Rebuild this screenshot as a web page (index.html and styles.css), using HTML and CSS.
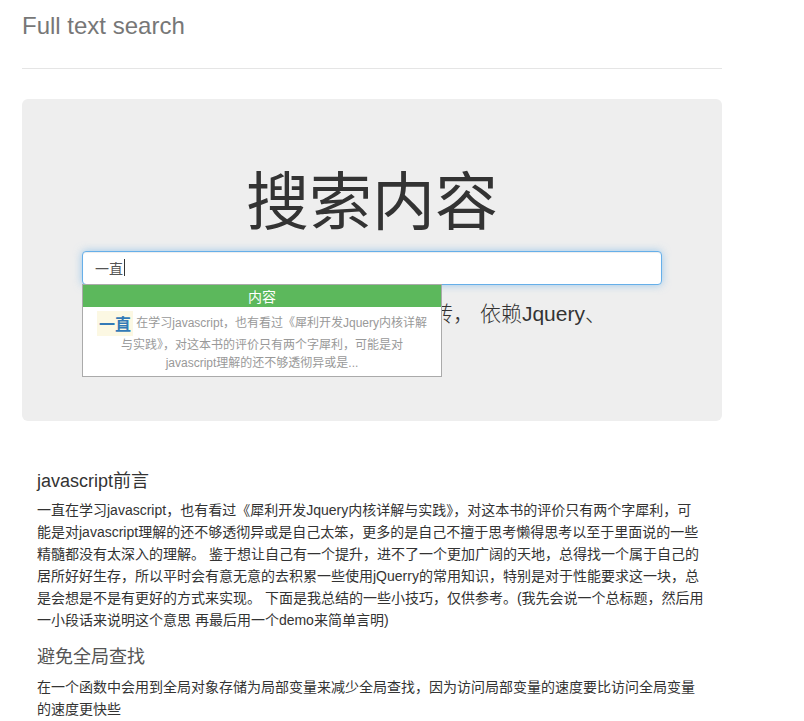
FILE: index.html
```html
<!DOCTYPE html>
<html lang="zh-CN">
<head>
<meta charset="utf-8">
<title>Full text search</title>
<link rel="stylesheet" href="styles.css">
</head>
<body>
  <div class="page-header">
    <h1 class="site-title">Full text search</h1>
  </div>

  <div class="jumbotron">
    <h1 class="hero-title">搜索内容</h1>
    <div class="search">
      <div class="search-input focused"><span class="search-value">一直</span><span class="caret"></span></div>
      <div class="suggest">
        <div class="suggest-head">内容</div>
        <div class="suggest-item"><span class="hit">一直</span> 在学习javascript，也有看过《犀利开发Jquery内核详解与实践》，对这本书的评价只有两个字犀利，可能是对javascript理解的还不够透彻异或是...</div>
      </div>
    </div>
    <p class="lead">实时提示搜索结果，无需页面跳转， 依赖Jquery、</p>
  </div>

  <div class="articles">
    <div class="article">
      <h4 class="article-title">javascript前言</h4>
      <p class="article-body">一直在学习javascript，也有看过《犀利开发Jquery内核详解与实践》，对这本书的评价只有两个字犀利，可能是对javascript理解的还不够透彻异或是自己太笨，更多的是自己不擅于思考懒得思考以至于里面说的一些精髓都没有太深入的理解。 鉴于想让自己有一个提升，进不了一个更加广阔的天地，总得找一个属于自己的居所好好生存，所以平时会有意无意的去积累一些使用jQuerry的常用知识，特别是对于性能要求这一块，总是会想是不是有更好的方式来实现。 下面是我总结的一些小技巧，仅供参考。(我先会说一个总标题，然后用一小段话来说明这个意思 再最后用一个demo来简单言明)</p>
    </div>
    <div class="article">
      <h4 class="article-title muted">避免全局查找</h4>
      <p class="article-body">在一个函数中会用到全局对象存储为局部变量来减少全局查找，因为访问局部变量的速度要比访问全局变量的速度更快些</p>
    </div>
  </div>
</body>
</html>
```

FILE: styles.css
```css
* {
  box-sizing: border-box;
}

body {
  margin: 0;
  background: #fff;
  color: #333;
  font-family: "Liberation Sans", Arial, "Noto Sans CJK SC", sans-serif;
  font-size: 14px;
  line-height: 1.42857;
}

/* Page header */
.page-header {
  width: 700px;
  margin-left: 22px;
  padding-bottom: 29px;
  border-bottom: 1px solid #e5e5e5;
}

.site-title {
  margin: 13px 0 0;
  font-size: 24px;
  font-weight: normal;
  line-height: 1.1;
  color: #777;
}

/* Hero block */
.jumbotron {
  width: 700px;
  margin: 30px 0 0 22px;
  padding: 48px 60px 72px;
  background: #eee;
  border-radius: 6px;
  text-align: center;
}

.hero-title {
  margin: 15px 0 19px;
  font-family: "Noto Sans CJK SC", sans-serif;
  font-size: 63px;
  font-weight: normal;
  line-height: 1.1;
  color: #333;
}

.search {
  position: relative;
  text-align: left;
}

.search-input {
  display: flex;
  align-items: center;
  height: 34px;
  padding: 0 12px;
  background: #fff;
  border: 1px solid #ccc;
  border-radius: 4px;
  font-family: "Noto Sans CJK SC", sans-serif;
  font-size: 14px;
  color: #555;
}

.search-input.focused {
  border-color: #66afe9;
  box-shadow: inset 0 1px 1px rgba(0, 0, 0, .075), 0 0 8px rgba(102, 175, 233, .6);
}

.caret {
  display: inline-block;
  width: 1px;
  height: 17px;
  margin-left: 1px;
  background: #333;
}

/* Autocomplete list */
.suggest {
  position: absolute;
  top: 33px;
  left: 0;
  z-index: 10;
  width: 360px;
  background: #fff;
  border: 1px solid #aaa;
  font-family: "Liberation Sans", Arial, "Noto Sans CJK SC", sans-serif;
}

.suggest-head {
  height: 22px;
  background: #5cb85c;
  color: #fff;
  font-family: "Noto Sans CJK SC", sans-serif;
  font-size: 14px;
  line-height: 22px;
  text-align: center;
}

.suggest-item {
  padding: 4px 13px;
  font-size: 12px;
  line-height: 18px;
  color: #999;
  text-align: center;
}

.hit {
  display: inline-block;
  padding: 0 2px;
  background: #fcf8e3;
  color: #337ab7;
  font-family: "Noto Sans CJK SC", sans-serif;
  font-size: 16px;
  font-weight: bold;
  line-height: 25px;
  vertical-align: middle;
}

.lead {
  margin: 14px 0 21px;
  font-size: 21px;
  font-weight: 300;
  line-height: 1.4;
  color: #333;
}

/* Articles */
.articles {
  width: 700px;
  margin-left: 22px;
  padding: 0 17px 0 15px;
}

.article-title {
  margin: 51px 0 7px;
  font-size: 18px;
  font-weight: normal;
  line-height: 1.1;
  color: #333;
}

.article-title.muted {
  margin-top: 17px;
  margin-bottom: 8px;
  color: #555;
}

.article-body {
  margin: 0;
  font-size: 14px;
  line-height: 22px;
  color: #333;
}
```
